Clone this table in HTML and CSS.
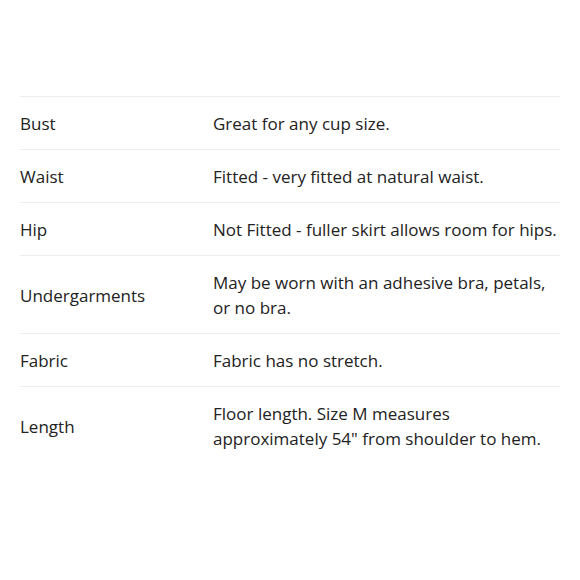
FILE: index.html
```html
<!DOCTYPE html>
<html>
<head>
<meta charset="utf-8">
<link rel="stylesheet" href="styles.css">
</head>
<body>
<div class="specs">
  <div class="row"><div class="label">Bust</div><div class="value">Great for any cup size.</div></div>
  <div class="row"><div class="label">Waist</div><div class="value">Fitted - very fitted at natural waist.</div></div>
  <div class="row"><div class="label">Hip</div><div class="value">Not Fitted - fuller skirt allows room for hips.</div></div>
  <div class="row"><div class="label">Undergarments</div><div class="value">May be worn with an adhesive bra, petals, or no bra.</div></div>
  <div class="row"><div class="label">Fabric</div><div class="value">Fabric has no stretch.</div></div>
  <div class="row last"><div class="label">Length</div><div class="value">Floor length. Size M measures approximately 54" from shoulder to hem.</div></div>
</div>
</body>
</html>
```
FILE: styles.css
```css
html, body {
  margin: 0;
  padding: 0;
  background: #fff;
}
body {
  font-family: "Open Sans", "Liberation Sans", sans-serif;
  font-size: 17px;
  color: #222;
}
.specs {
  margin: 96px 20px 0 20px;
  border-top: 1px solid #ececec;
}
.row {
  display: grid;
  grid-template-columns: 193px 1fr;
  align-items: center;
  padding: 14px 0 13px;
  line-height: 25px;
  border-bottom: 1px solid #ececec;
}
.row.last {
  border-bottom: none;
}
.value {
  padding-right: 0;
}
```
